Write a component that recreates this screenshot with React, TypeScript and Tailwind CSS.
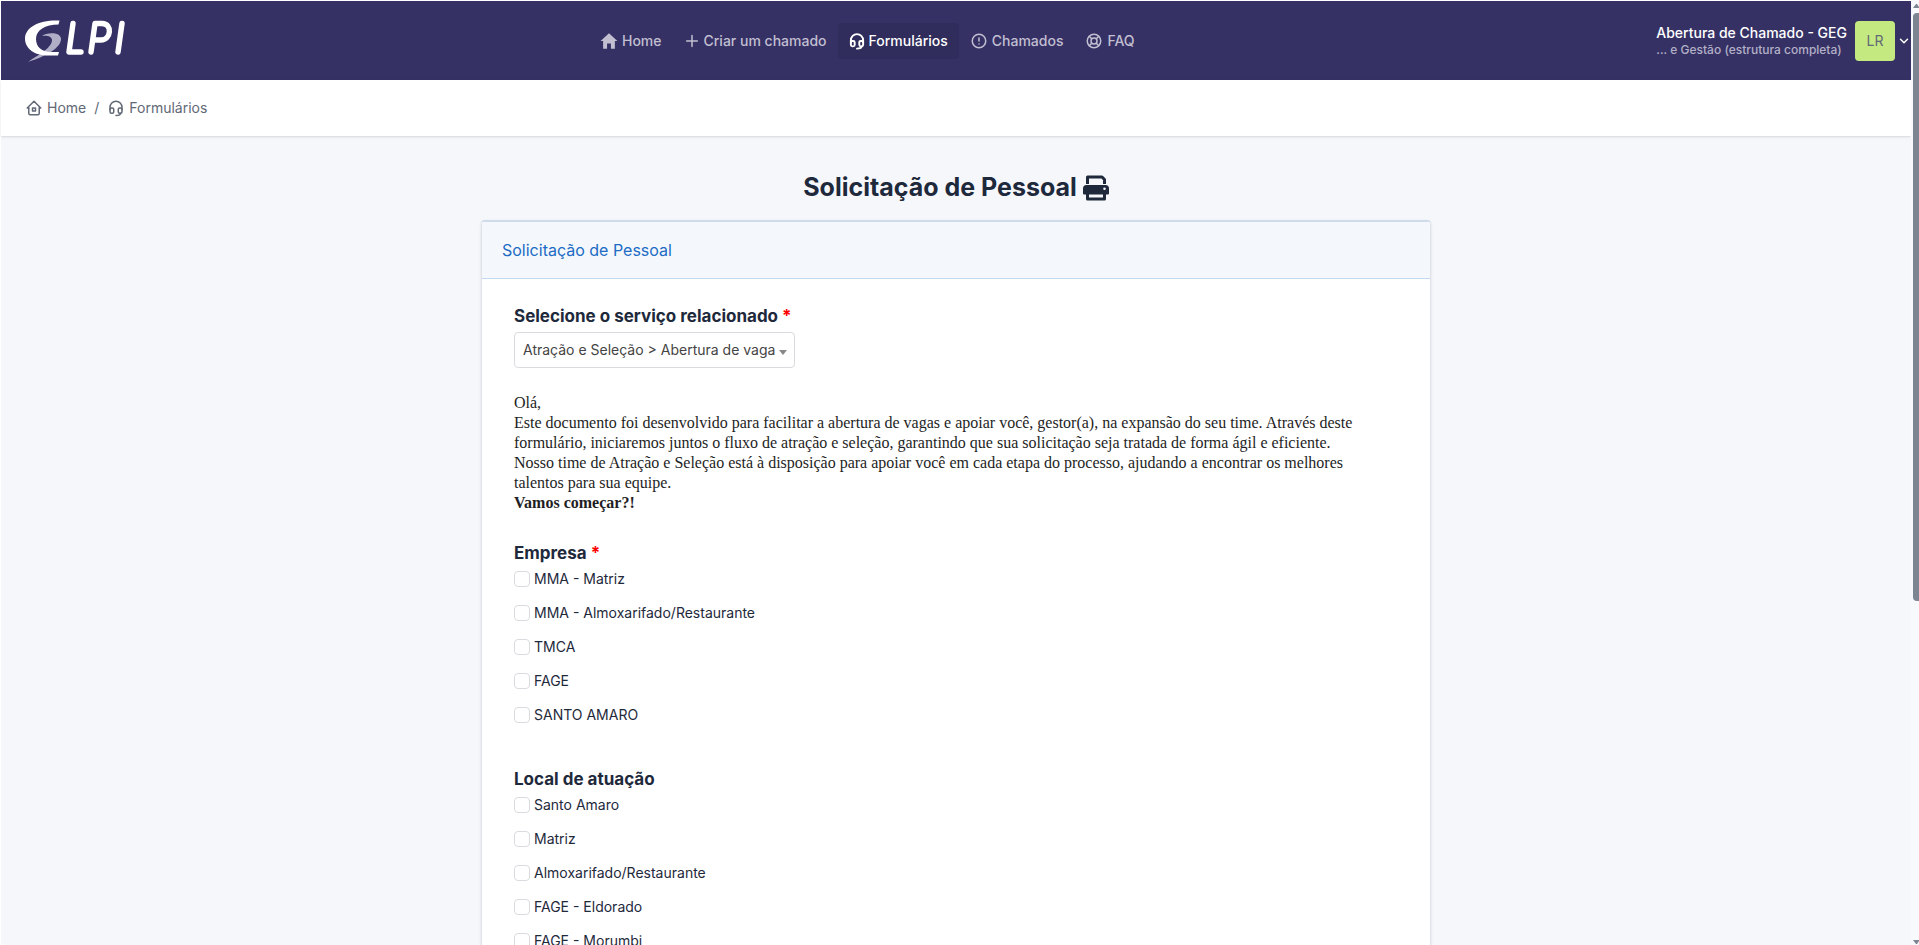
import type { ReactNode } from "react";
import { TbHome2, TbHeadset, TbPlus, TbAlertCircle, TbLifebuoy, TbChevronDown } from "react-icons/tb";
import { IoMdHome } from "react-icons/io";

const empresas = ["MMA - Matriz", "MMA - Almoxarifado/Restaurante", "TMCA", "FAGE", "SANTO AMARO"];
const locais = ["Santo Amaro", "Matriz", "Almoxarifado/Restaurante", "FAGE - Eldorado", "FAGE - Morumbi"];

function Logo() {
  return (
    <svg viewBox="0 0 102 44" className="h-11 w-[102px]" fill="none" aria-label="GLPI">
      <path d="M17 17C22 13 36 13 36 20C36 29 21 37 3 43C13 36 27 29 27 21C27 17 21 16 17 17Z" fill="#b0aec7" />
      <path
        d="M34.500 1.500C15 0.500 0 8 0 19.500C0 30 10 36.500 23 36.500L33 36.500L34 33L26 33C17 33 11 28 11 20C11 11 20 5.500 33.500 5.500Z"
        fill="#fff"
      />
      <g stroke="#fff" strokeWidth="5.400" strokeLinecap="round" strokeLinejoin="round">
        <path d="M48 4.500L44 33H56" />
        <path d="M66 33L70 4.500H77C88 4.500 86 21 76 21H69" />
        <path d="M97 4.500L93 33" />
      </g>
    </svg>
  );
}

function PrinterIcon() {
  return (
    <svg viewBox="0 0 26 26" className="size-[26px]" fill="none" aria-hidden="true">
      <path d="M4.500 9V2H19L21.500 4.500V9" stroke="#1e293b" strokeWidth="3" strokeLinejoin="round" />
      <path
        fillRule="evenodd"
        d="M3.500 10H22.500A3.500 3.500 0 0 1 26 13.500V18.500Q26 19.500 25 19.500H1Q0 19.500 0 18.500V13.500A3.500 3.500 0 0 1 3.500 10ZM21.500 12.500A1.300 1.300 0 1 0 21.500 15.100A1.300 1.300 0 1 0 21.500 12.500Z"
        fill="#1e293b"
      />
      <path d="M4.500 18H21.500V24H4.500Z" fill="#f5f7fb" stroke="#1e293b" strokeWidth="3" strokeLinejoin="round" />
    </svg>
  );
}

function NavItem({ icon, label, active }: { icon: ReactNode; label: string; active?: boolean }) {
  return (
    <a
      href="#"
      className={
        active
          ? "flex h-9 items-center gap-1 rounded bg-[#302c5b] px-[11px] text-white"
          : "flex h-9 items-center gap-1 px-[11px] text-[#c1bfd0]"
      }
    >
      {icon}
      {label}
    </a>
  );
}

function CheckGroup({ title, required, options }: { title: string; required?: boolean; options: string[] }) {
  return (
    <fieldset>
      <legend className="text-[17px] leading-6 font-bold">
        {title} {required && <span className="text-[#f00]">*</span>}
      </legend>
      <div className="mt-1 flex flex-col gap-[14px]">
        {options.map((option) => (
          <label key={option} className="flex h-5 items-center gap-1 text-sm">
            <input
              type="checkbox"
              className="size-4 shrink-0 appearance-none rounded border border-[#d9dbde] bg-white checked:bg-[#206bc4]"
            />
            {option}
          </label>
        ))}
      </div>
    </fieldset>
  );
}

function ScrollTrack() {
  return (
    <div className="flex w-2 shrink-0 flex-col bg-[#f8f9fc] pt-1 pb-px pl-0.5" aria-hidden="true">
      <svg viewBox="0 0 6 4" className="h-1 w-1.5" fill="#7d8492">
        <path d="M0 4L3 0H4L6 3V4Z" />
      </svg>
      <div className="mt-[5px] h-[62.5%] w-1.5 rounded-l bg-[#7d8492]" />
      <svg viewBox="0 0 6 4" className="mt-auto h-1 w-1.5" fill="#7d8492">
        <path d="M0 0H6V1L4 4H3Z" />
      </svg>
    </div>
  );
}

export default function App() {
  return (
    <div className="flex h-screen overflow-hidden bg-[#f5f7fb] font-['Inter',sans-serif] text-sm text-[#1e293b]">
      <div className="flex min-w-0 flex-1 flex-col border-t border-l border-white">
        <header className="grid h-[79px] shrink-0 grid-cols-[14fr_auto_19fr] items-center bg-[#363165] pl-6">
          <a href="#" className="w-fit">
            <Logo />
          </a>
          <nav className="flex items-center font-medium">
            <NavItem icon={<IoMdHome className="size-[18px] scale-115" />} label="Home" />
            <NavItem icon={<TbPlus className="size-4 scale-115" />} label="Criar um chamado" />
            <NavItem icon={<TbHeadset className="size-4 scale-115" strokeWidth={2.5} />} label="Formulários" active />
            <NavItem icon={<TbAlertCircle className="size-[18px]" />} label="Chamados" />
            <NavItem icon={<TbLifebuoy className="size-[18px]" />} label="FAQ" />
          </nav>
          <button type="button" className="flex items-center justify-self-end text-left text-white">
            <span className="mr-2 flex flex-col">
              <span className="text-sm leading-[18px] font-medium">Abertura de Chamado - GEG</span>
              <span className="text-xs leading-4 font-medium text-[#b2b0c6]">... e Gestão (estrutura completa)</span>
            </span>
            <span className="flex size-10 items-center justify-center rounded bg-[#c4e980] text-sm text-[#616876]">LR</span>
            <TbChevronDown className="ml-0.5 size-3.5" strokeWidth={2.5} />
          </button>
        </header>
        <nav className="flex h-14 shrink-0 items-center bg-white px-6 text-sm text-[#616876] shadow-sm">
          <a href="#" className="flex items-center gap-1">
            <TbHome2 className="size-[18px]" />
            Home
          </a>
          <span className="px-2">/</span>
          <a href="#" className="flex items-center gap-1">
            <TbHeadset className="size-[18px]" />
            Formulários
          </a>
        </nav>
        <main className="min-h-0 flex-1 overflow-hidden px-4 pt-8">
          <div className="mx-auto max-w-[950px]">
            <h1 className="flex h-10 items-center justify-center gap-1.5 text-[25px] font-bold">
              Solicitação de Pessoal
              <button type="button" aria-label="Imprimir">
                <PrinterIcon />
              </button>
            </h1>
            <section className="mt-3 rounded border border-t-2 border-[#e0e4ea] border-t-[#cfdaea] bg-white shadow-sm">
              <h2 className="flex h-[57px] items-center border-b border-[#c3d9f0] bg-[#f4f8fc] px-5 text-base text-[#206bc4]">
                Solicitação de Pessoal
              </h2>
              <form className="px-8 pt-[25px]">
                <label htmlFor="servico" className="block text-[17px] leading-6 font-bold">
                  Selecione o serviço relacionado <span className="text-[#f00]">*</span>
                </label>
                <div className="relative mt-1 w-fit">
                  <select
                    id="servico"
                    className="h-9 appearance-none rounded border border-[#d9dbde] bg-white pr-[18px] pl-2 text-sm text-[#444]"
                  >
                    <option>Atração e Seleção &gt; Abertura de vaga</option>
                  </select>
                  <svg viewBox="0 0 8 5" className="pointer-events-none absolute top-[18px] right-2 h-[5px] w-2" fill="#888">
                    <path d="M0 0H8L4 5Z" />
                  </svg>
                </div>
                <div className="mt-[25px] mb-7 pr-5 font-['Liberation_Serif',serif] text-base leading-5 text-[#1e1e24]">
                  <p>Olá,</p>
                  <p>
                    Este documento foi desenvolvido para facilitar a abertura de vagas e apoiar você, gestor(a), na
                    expansão do seu time. Através deste formulário, iniciaremos juntos o fluxo de atração e seleção,
                    garantindo que sua solicitação seja tratada de forma ágil e eficiente.
                  </p>
                  <p>
                    Nosso time de Atração e Seleção está à disposição para apoiar você em cada etapa do processo,
                    ajudando a encontrar os melhores talentos para sua equipe.
                  </p>
                  <p className="font-bold">Vamos começar?!</p>
                </div>
                <div className="flex flex-col gap-[42px]">
                  <CheckGroup title="Empresa" required options={empresas} />
                  <CheckGroup title="Local de atuação" options={locais} />
                </div>
              </form>
            </section>
          </div>
        </main>
      </div>
      <ScrollTrack />
    </div>
  );
}
